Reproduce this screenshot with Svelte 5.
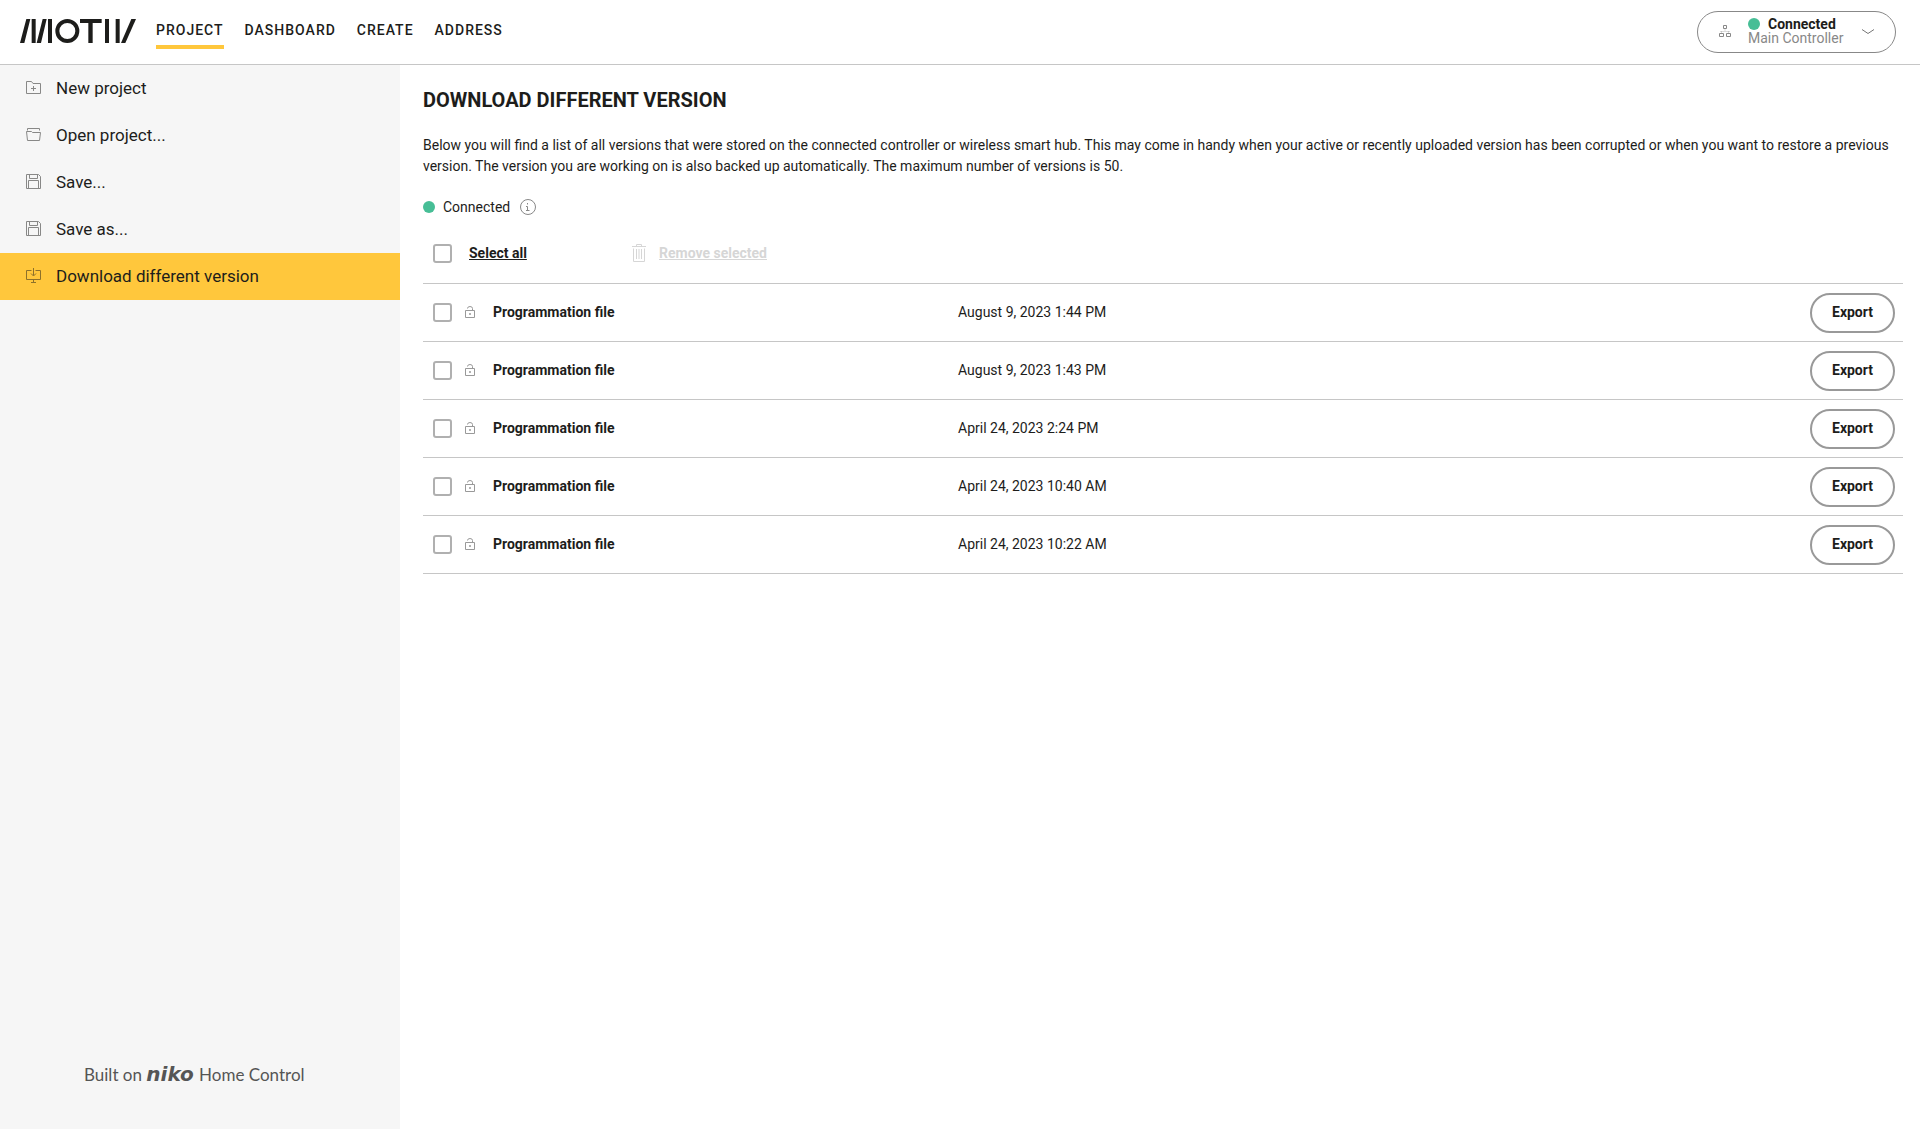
<script>
  const links = ['Project', 'Dashboard', 'Create', 'Address'];
  let page = $state('Project');

  const menu = [
    { label: 'New project', icon: 'new' },
    { label: 'Open project...', icon: 'open' },
    { label: 'Save...', icon: 'save' },
    { label: 'Save as...', icon: 'save' },
    { label: 'Download different version', icon: 'download' }
  ];
  let active = $state('Download different version');

  let versions = $state([
    { name: 'Programmation file', date: 'August 9, 2023 1:44 PM', selected: false },
    { name: 'Programmation file', date: 'August 9, 2023 1:43 PM', selected: false },
    { name: 'Programmation file', date: 'April 24, 2023 2:24 PM', selected: false },
    { name: 'Programmation file', date: 'April 24, 2023 10:40 AM', selected: false },
    { name: 'Programmation file', date: 'April 24, 2023 10:22 AM', selected: false }
  ]);

  let anySelected = $derived(versions.some(v => v.selected));
  let allSelected = $derived(versions.length > 0 && versions.every(v => v.selected));

  function toggleAll() {
    const value = !allSelected;
    versions.forEach(v => (v.selected = value));
  }

  function removeSelected() {
    versions = versions.filter(v => !v.selected);
  }
</script>

<header>
  <a class="logo" href="#home" aria-label="Motiv">
    <svg viewBox="0 0 348 72" fill="#1d1d1b">
      <path d="M0 72 19 0H31L13 72ZM35 0H47V72H35ZM50 72 68 0H80L63 72ZM84 0H96V72H84Z" />
      <circle cx="142" cy="36" r="30" fill="none" stroke="#1d1d1b" stroke-width="12" />
      <path d="M180 0H245V12H218V72H205V12H180ZM255 0H267V72H255ZM287 0H299V72H287Z" />
      <path d="M303 72 334 0H348L316 72Z" />
    </svg>
  </a>
  <nav>
    {#each links as link}
      <a
        href="#{link.toLowerCase()}"
        aria-current={page === link ? 'page' : undefined}
        onclick={() => (page = link)}>
        {link}
      </a>
    {/each}
  </nav>
  <button class="controller">
    <svg class="network" viewBox="0 0 12 12" fill="none" stroke="#888">
      <path d="M4.5.5h3v3h-3ZM.5 8.5h4v3h-4ZM7.5 8.5h4v3h-4Z" />
      <path d="M6 4v2M1 6.5h10M2.5 6v2M9.5 6v2" opacity="0.3" />
    </svg>
    <span class="status">
      <span class="state"><span class="dot"></span><strong>Connected</strong></span>
      <span class="device">Main Controller</span>
    </span>
    <svg class="chevron" viewBox="0 0 12 6" fill="none" stroke="#777">
      <path d="M0 .5 6 4.5 12 .5" />
    </svg>
  </button>
</header>

<div class="layout">
  <aside>
    <ul>
      {#each menu as item}
        <li>
          <button class:active={active === item.label} onclick={() => (active = item.label)}>
            <svg viewBox="0 0 15 15" fill="none" stroke="currentColor">
              {#if item.icon === 'new'}
                <path d="M.5 13.5v-12h5l1.5 2h7.5v10ZM7.5 6v5M5 8.5h5" />
              {:else if item.icon === 'open'}
                <path d="M1.5 3.5v-2h12v2M.5 4.5h5l1 1h8l-1 8h-12Z" />
              {:else if item.icon === 'save'}
                <path d="M.5.5h12l2 2v12H.5ZM3.5.5v4h8v-4M2.5 14.5v-8h10v8" />
              {:else}
                <path d="M5.5 2.5h-5v9h14v-9h-5M7.5 0v7.5M5 5.5 7.5 8 10 5.5M7.5 11.5v3M5 14.5h5" />
              {/if}
            </svg>
            {item.label}
          </button>
        </li>
      {/each}
    </ul>
    <p class="built">Built on <b>niko</b> Home Control</p>
  </aside>

  <main>
    <h1>Download different version</h1>
    <p class="intro">
      Below you will find a list of all versions that were stored on the connected controller or
      wireless smart hub. This may come in handy when your active or recently uploaded version has
      been corrupted or when you want to restore a previous version. The version you are working on
      is also backed up automatically. The maximum number of versions is 50.
    </p>

    <div class="connection">
      <span class="dot"></span>
      Connected
      <button class="info" aria-label="Connection info">
        <svg viewBox="0 0 16 16" fill="none" stroke="#888">
          <circle cx="8" cy="8" r="7.5" />
          <path d="M7.5 4v1.5M6 7.5h1.5v4M6 11.5h3.5" />
        </svg>
      </button>
    </div>

    <div class="toolbar">
      <input id="all" type="checkbox" checked={allSelected} onchange={toggleAll} />
      <label for="all">Select all</label>
      <button class="remove" disabled={!anySelected} onclick={removeSelected}>
        <svg viewBox="0 0 14 18" fill="none" stroke="currentColor">
          <path d="M0 2.5h14M4.5 2.5v-2h5v2M1.5 4.5v13h11v-13M4.5 5v10M7 5v10M9.5 5v10" />
        </svg>
        <span>Remove selected</span>
      </button>
    </div>

    <table>
      <tbody>
        {#each versions as version, i}
          <tr>
            <td class="check">
              <div>
                <input
                  id="version-{i}"
                  type="checkbox"
                  aria-label="{version.name} {version.date}"
                  bind:checked={version.selected} />
                <svg viewBox="0 0 10 12" fill="none" stroke="#999">
                  <path d="M.5 4.5h9v7h-9ZM2.5 2.5a2.500 2 0 0 1 5 0v2M4.5 7.5h1v1h-1Z" />
                </svg>
              </div>
            </td>
            <td class="name"><label for="version-{i}">{version.name}</label></td>
            <td class="date">{version.date}</td>
            <td class="action"><button class="export">Export</button></td>
          </tr>
        {/each}
      </tbody>
    </table>
  </main>
</div>

<style>
  :global(body) {
    font-family: Roboto, sans-serif;
    font-size: 14px;
    color: #1d1d1b;
    background-color: white;
  }

  :global(#app) {
    min-height: 100vh;
    display: flex;
    flex-direction: column;
  }

  button {
    padding: 0;
    border: none;
    background: none;
    font: inherit;
    color: inherit;
    cursor: pointer;
  }

  svg {
    display: block;
    flex: none;
  }

  header {
    height: 64px;
    display: flex;
    align-items: center;
    padding: 0 24px 0 20px;
    border-bottom: 1px solid #c6c6c6;
  }

  .logo {
    padding-bottom: 2px;
  }

  .logo svg {
    width: 116px;
    height: 24px;
  }

  nav {
    display: flex;
    gap: 21px;
    margin-left: 20px;
  }

  nav a {
    padding: 7px 0;
    border-bottom: 4px solid transparent;
    font-weight: 500;
    line-height: 16px;
    letter-spacing: 1px;
    text-transform: uppercase;
    text-decoration: none;
    color: inherit;
  }

  nav a[aria-current] {
    border-color: #ffc73c;
  }

  .controller {
    display: flex;
    align-items: center;
    width: 199px;
    height: 42px;
    margin-left: auto;
    padding: 0 21px;
    border: 1px solid #888;
    border-radius: 21px;
    text-align: left;
  }

  .network {
    width: 12px;
    height: 12px;
    padding-bottom: 2px;
  }

  .status {
    margin-left: 17px;
    padding-bottom: 2px;
    line-height: 14px;
  }

  .state {
    display: flex;
    align-items: center;
    gap: 8px;
  }

  .state strong {
    font-weight: 700;
  }

  .device {
    display: block;
    color: #888;
  }

  .chevron {
    width: 12px;
    height: 6px;
    margin-left: auto;
  }

  .dot {
    flex: none;
    width: 12px;
    height: 12px;
    border-radius: 50%;
    background-color: #47be96;
  }

  .layout {
    flex: 1;
    display: flex;
  }

  aside {
    flex: none;
    width: 400px;
    display: flex;
    flex-direction: column;
    justify-content: space-between;
    background-color: #f6f6f6;
  }

  ul {
    margin: 0;
    padding: 0;
    list-style: none;
  }

  li button {
    width: 100%;
    height: 47px;
    display: flex;
    align-items: center;
    gap: 15px;
    padding: 0 26px 2px;
    font-size: 17px;
  }

  li svg {
    width: 15px;
    height: 15px;
    opacity: 0.5;
  }

  .active {
    background-color: #ffc73c;
  }

  .built {
    margin: 0 0 42px 84px;
    font-family: Lato, sans-serif;
    font-size: 17px;
    line-height: 24px;
    color: #555;
  }

  .built b {
    margin-right: 1px;
    font-family: 'DejaVu Sans', sans-serif;
    font-style: italic;
    font-size: 20px;
  }

  main {
    flex: 1;
    min-width: 0;
    padding: 23px 17px 24px 23px;
  }

  h1 {
    margin: 0 0 23px;
    font-size: 20px;
    font-weight: 700;
    line-height: 24px;
    text-transform: uppercase;
  }

  .intro {
    margin: 0;
    line-height: 21px;
  }

  .connection {
    display: flex;
    align-items: center;
    gap: 8px;
    height: 24px;
    margin-top: 18px;
  }

  .info {
    margin-left: 2px;
  }

  .info svg {
    width: 16px;
    height: 16px;
  }

  .toolbar {
    display: flex;
    align-items: center;
    height: 60px;
    margin-top: 4px;
    padding-left: 10px;
    border-bottom: 1px solid #c6c6c6;
  }

  input {
    appearance: none;
    box-sizing: border-box;
    flex: none;
    width: 19px;
    height: 19px;
    margin: 0;
    border: 2px solid #b0b0b0;
    border-radius: 3px;
    background-color: white;
  }

  input:checked {
    background-color: #ffc73c;
  }

  .toolbar label {
    width: 163px;
    margin-left: 17px;
    font-weight: 700;
    text-decoration: underline;
  }

  .remove {
    display: flex;
    align-items: center;
    gap: 13px;
    font-weight: 700;
    text-decoration: underline;
  }

  .remove:disabled {
    color: #d6d6d6;
    cursor: default;
  }

  .remove svg {
    width: 14px;
    height: 18px;
  }

  table {
    width: 100%;
    border-collapse: collapse;
    table-layout: fixed;
  }

  td {
    height: 57px;
    padding: 0;
    border-bottom: 1px solid #c6c6c6;
  }

  .check {
    width: 70px;
  }

  .check div {
    display: flex;
    align-items: center;
    gap: 13px;
    padding-left: 10px;
  }

  .check svg {
    width: 10px;
    height: 12px;
    padding-bottom: 2px;
  }

  .name,
  .date {
    height: 55px;
    padding-bottom: 2px;
  }

  .name {
    width: 465px;
    font-weight: 700;
  }

  .action {
    width: 93px;
  }

  .export {
    width: 85px;
    height: 40px;
    padding-bottom: 2px;
    border: 2px solid #999;
    border-radius: 20px;
    font-weight: 700;
  }
</style>
